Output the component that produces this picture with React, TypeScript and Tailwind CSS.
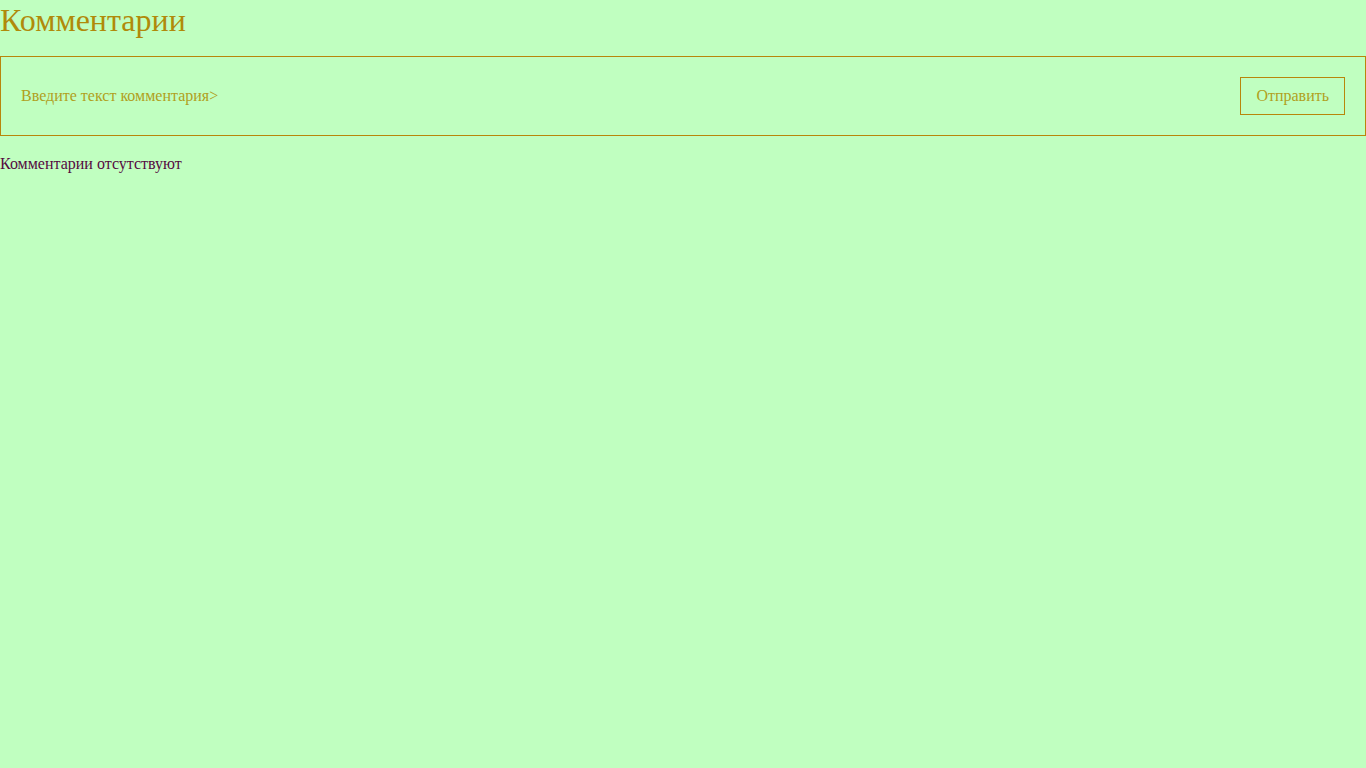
export default function App() {
  return (
    <div className="min-h-screen w-full bg-[#c0ffc0]" style={{ fontFamily: '"Liberation Serif", "Times New Roman", serif' }}>
      <h1 className="m-0 text-[32px] leading-[41px] font-normal text-[#b08a0a]">Комментарии</h1>
      <div className="mt-[15px] flex items-center justify-between border border-[#b8860b] p-[20px]">
        <span className="text-[16px] leading-[18px] text-[#b0a020]">Введите текст комментария&gt;</span>
        <button className="h-[38px] border border-[#b8860b] bg-transparent px-[15px] text-[16px] leading-[18px] text-[#b0a020]">
          Отправить
        </button>
      </div>
      <p className="mt-[19px] text-[16px] leading-[18px] text-[#550a40]">Комментарии отсутствуют</p>
    </div>
  );
}
